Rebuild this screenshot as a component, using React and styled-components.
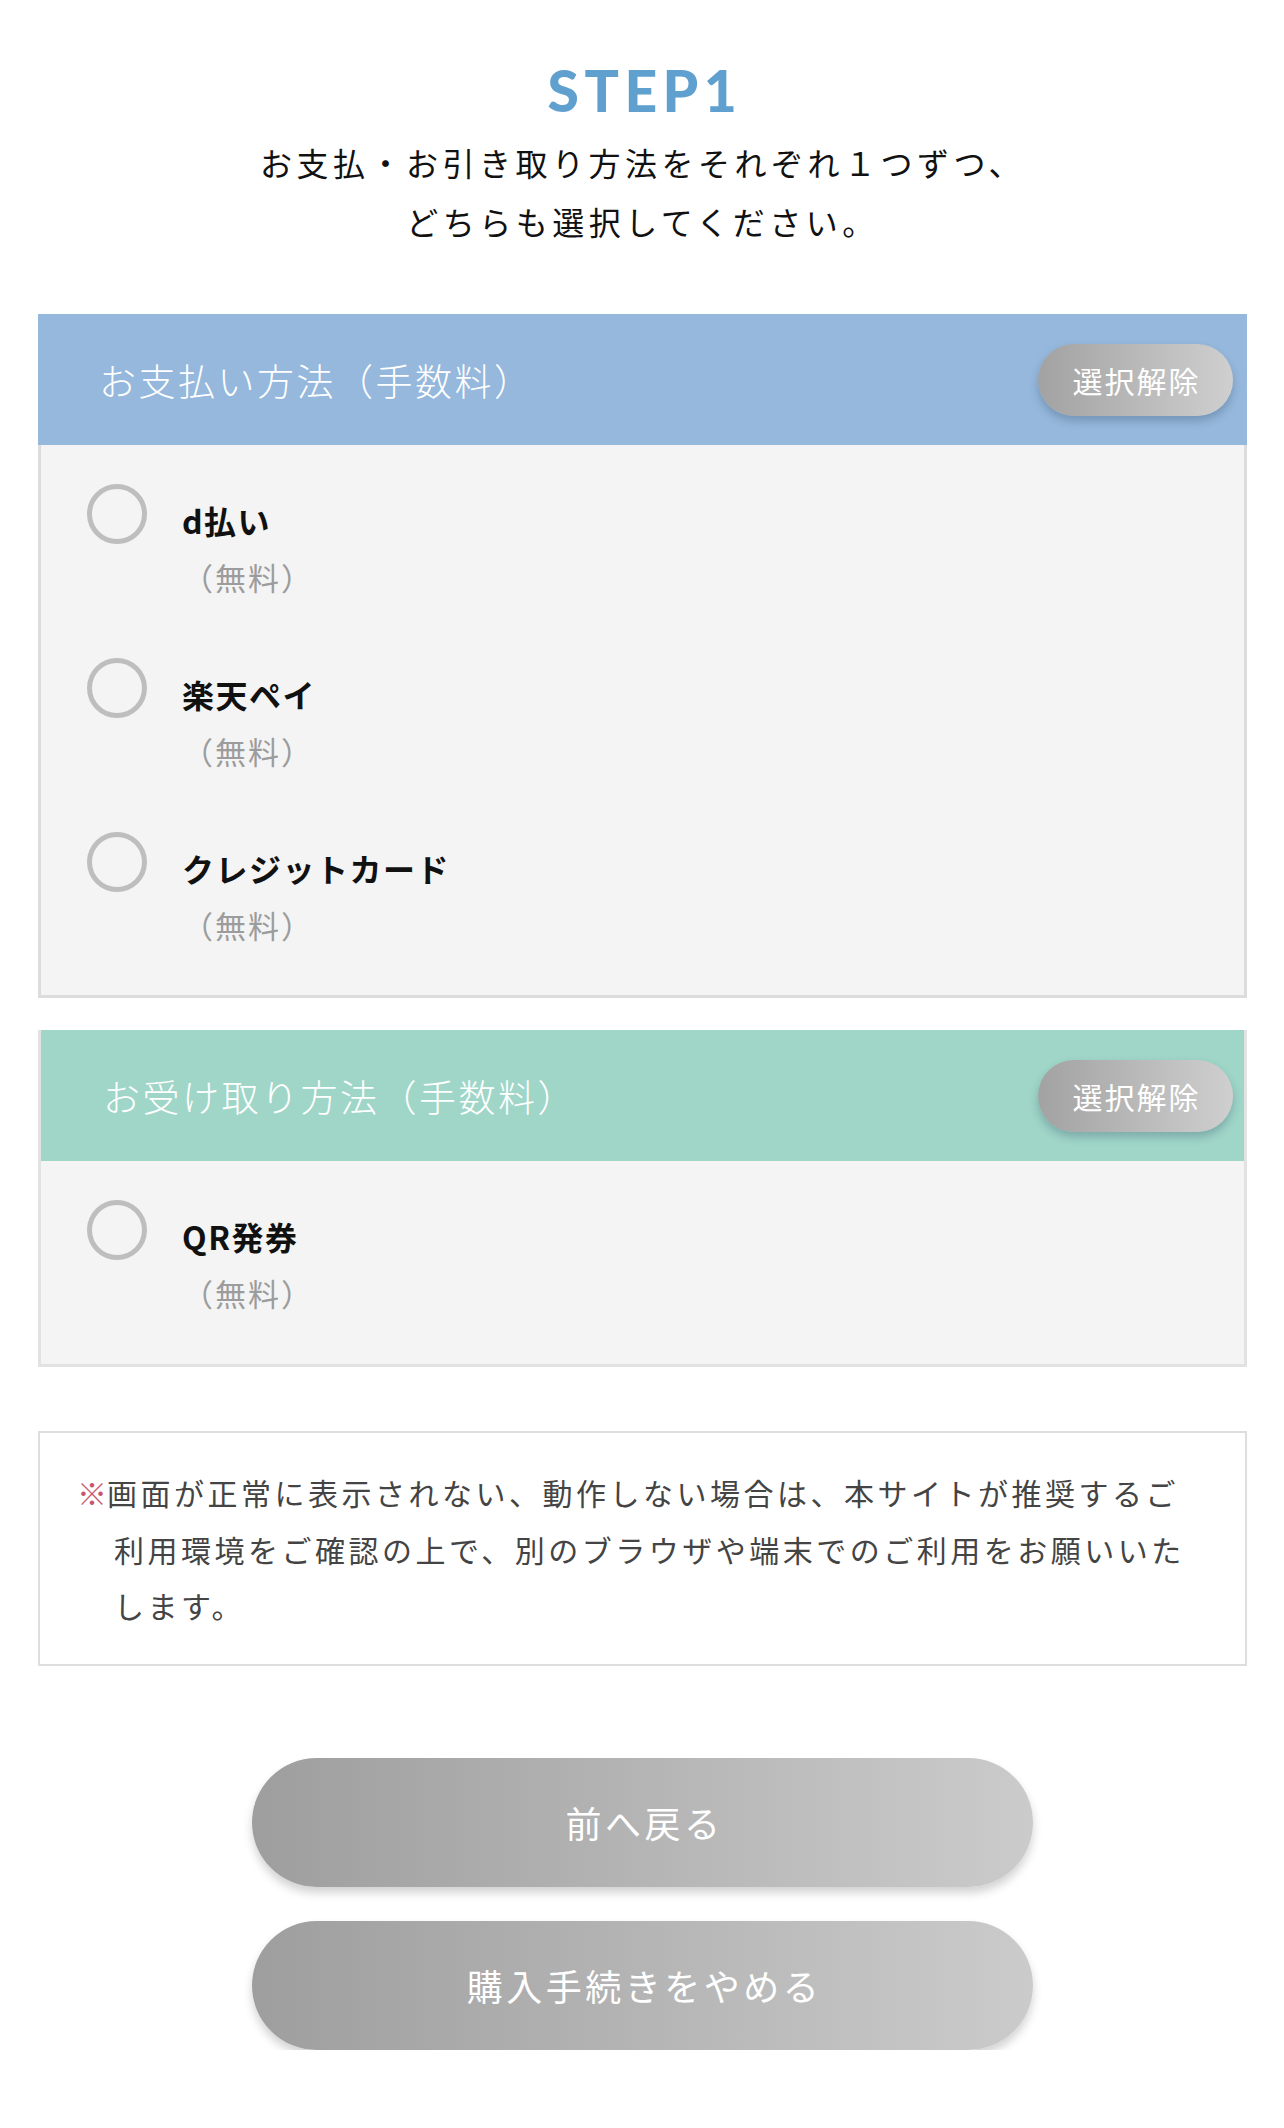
import React from "react";
import styled, { createGlobalStyle } from "styled-components";

const GlobalStyle = createGlobalStyle`
  * { box-sizing: border-box; }
  body {
    margin: 0;
    background: #fff;
    font-family: "Noto Sans CJK JP", "Noto Sans", sans-serif;
    color: #111;
  }
`;

const Page = styled.div`
  padding: 62px 37px 74px 38px;
`;

const StepTitle = styled.h1`
  margin: 0;
  text-align: center;
  font-family: "Lato", "Noto Sans", sans-serif;
  font-weight: 900;
  font-size: 57px;
  line-height: 56px;
  letter-spacing: 5.5px;
  padding-left: 5px;
  color: #5fa0cf;
`;

const Lead = styled.p`
  margin: 15px 0 0;
  text-align: center;
  font-size: 32px;
  line-height: 59px;
  letter-spacing: 4.5px;
  color: #111;
`;

const Panel = styled.section`
  margin-top: ${(p) => p.$gap}px;
  border: ${(p) => (p.$framed ? "3px solid #e2e2e2" : "none")};
  border-top: none;
`;

const PanelHead = styled.div`
  height: 131px;
  display: flex;
  align-items: center;
  justify-content: space-between;
  padding: 0 ${(p) => (p.$framed ? 11 : 14)}px 0 ${(p) => (p.$framed ? 62 : 61)}px;
  background: ${(p) => p.$color};
`;

const PanelTitle = styled.h2`
  margin: 0;
  font-size: 37px;
  font-weight: 300;
  letter-spacing: 2.5px;
  color: #fff;
`;

const ClearButton = styled.button`
  width: 195px;
  height: 72px;
  border: none;
  border-radius: 36px;
  background: linear-gradient(to right, #a2a2a2, #cfcfcf);
  box-shadow: 0 5px 9px rgba(40, 60, 90, 0.28);
  color: #fff;
  font-family: inherit;
  font-size: 30px;
  letter-spacing: 2px;
  padding: 0 0 0 2px;
`;

const PanelBody = styled.div`
  background: #f4f4f4;
  padding: 39px 0 ${(p) => (p.$framed ? 49 : 48)}px 46px;
  border: ${(p) => (p.$framed ? "none" : "3px solid #dcdcdc")};
  border-top: none;
  display: flex;
  flex-direction: column;
  gap: 59px;
`;

const Option = styled.label`
  display: flex;
  align-items: flex-start;
`;

const Radio = styled.span`
  flex: none;
  width: 60px;
  height: 60px;
  border-radius: 50%;
  border: 5px solid #bebebe;
`;

const OptionText = styled.div`
  margin-left: 35px;
  padding-top: 14px;
`;

const OptionName = styled.div`
  font-size: 32px;
  font-weight: 700;
  line-height: 44px;
  letter-spacing: 1.5px;
  color: #111;
`;

const OptionFee = styled.div`
  margin-top: 13px;
  font-size: 31px;
  line-height: 44px;
  letter-spacing: 2px;
  color: #9c9c9c;
`;

const Notice = styled.div`
  margin-top: 64px;
  border: 2px solid #dedede;
  background: #fff;
  padding: 31px 45px 30px 74px;
`;

const NoticeText = styled.p`
  margin: 0;
  text-indent: -37px;
  font-size: 30px;
  line-height: 56.5px;
  letter-spacing: 3.5px;
  color: #444;
`;

const Mark = styled.span`
  color: #c9566f;
  letter-spacing: 0;
`;

const Actions = styled.div`
  margin-top: 92px;
  display: flex;
  flex-direction: column;
  align-items: center;
  gap: 34px;
  overflow: hidden;
  padding: 0 20px;
`;

const PillButton = styled.button`
  width: 781px;
  height: 129px;
  border: none;
  border-radius: 65px;
  background: linear-gradient(to right, #9e9e9e, #cbcbcb);
  box-shadow: 0 6px 10px rgba(0, 0, 0, 0.18);
  color: #fff;
  font-family: inherit;
  font-size: 36px;
  letter-spacing: 3.5px;
  padding: 0 0 0 4px;
`;

const payments = ["d払い", "楽天ペイ", "クレジットカード"];
const receipts = ["QR発券"];

function MethodPanel({ title, color, items, framed, gap }) {
  return (
    <Panel $framed={framed} $gap={gap}>
      <PanelHead $color={color} $framed={framed}>
        <PanelTitle>{title}</PanelTitle>
        <ClearButton type="button">選択解除</ClearButton>
      </PanelHead>
      <PanelBody $framed={framed}>
        {items.map((name) => (
          <Option key={name}>
            <Radio />
            <OptionText>
              <OptionName>{name}</OptionName>
              <OptionFee>（無料）</OptionFee>
            </OptionText>
          </Option>
        ))}
      </PanelBody>
    </Panel>
  );
}

export default function App() {
  return (
    <>
      <GlobalStyle />
      <Page>
        <StepTitle>STEP1</StepTitle>
        <Lead>
          お支払・お引き取り方法をそれぞれ１つずつ、
          <br />
          どちらも選択してください。
        </Lead>

        <MethodPanel
          title="お支払い方法（手数料）"
          color="#95b8dc"
          items={payments}
          gap={63}
        />
        <MethodPanel
          title="お受け取り方法（手数料）"
          color="#9fd6c8"
          items={receipts}
          framed
          gap={32}
        />

        <Notice>
          <NoticeText>
            <Mark>※</Mark>
            画面が正常に表示されない、動作しない場合は、本サイトが推奨するご利用環境をご確認の上で、別のブラウザや端末でのご利用をお願いいたします。
          </NoticeText>
        </Notice>

        <Actions>
          <PillButton type="button">前へ戻る</PillButton>
          <PillButton type="button">購入手続きをやめる</PillButton>
        </Actions>
      </Page>
    </>
  );
}
